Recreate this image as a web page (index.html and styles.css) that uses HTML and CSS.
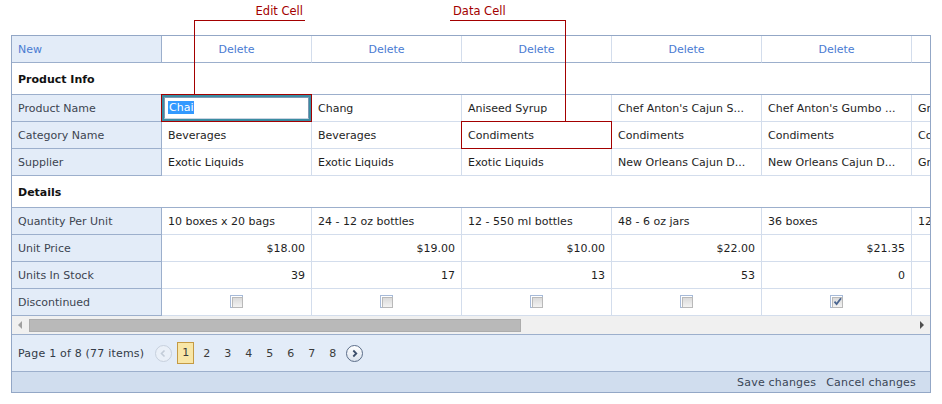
FILE: index.html
```html
<!DOCTYPE html>
<html>
<head>
<meta charset="utf-8">
<title>Vertical Grid</title>
<link rel="stylesheet" href="styles.css">
</head>
<body>
<div class="page">
  <div class="callout callout-edit"><span class="callout-text">Edit Cell</span></div>
  <div class="callout callout-data"><span class="callout-text">Data Cell</span></div>

  <div class="grid">
    <div class="rows">
      <div class="row head">
        <div class="cell label"><span class="link">New</span></div>
        <div class="cell center"><span class="link">Delete</span></div>
        <div class="cell center"><span class="link">Delete</span></div>
        <div class="cell center"><span class="link">Delete</span></div>
        <div class="cell center"><span class="link">Delete</span></div>
        <div class="cell center"><span class="link">Delete</span></div>
        <div class="cell center"><span class="link">Delete</span></div>
      </div>
      <div class="band">Product Info</div>
      <div class="row">
        <div class="cell label">Product Name</div>
        <div class="cell boxed">
          <div class="editor"><div class="editor-input"><span class="sel">Chai</span></div></div>
        </div>
        <div class="cell">Chang</div>
        <div class="cell">Aniseed Syrup</div>
        <div class="cell">Chef Anton's Cajun S...</div>
        <div class="cell">Chef Anton's Gumbo ...</div>
        <div class="cell">Grandma's Boysenberry Spread</div>
      </div>
      <div class="row">
        <div class="cell label">Category Name</div>
        <div class="cell">Beverages</div>
        <div class="cell">Beverages</div>
        <div class="cell boxed data-box">Condiments</div>
        <div class="cell">Condiments</div>
        <div class="cell">Condiments</div>
        <div class="cell">Condiments</div>
      </div>
      <div class="row">
        <div class="cell label">Supplier</div>
        <div class="cell">Exotic Liquids</div>
        <div class="cell">Exotic Liquids</div>
        <div class="cell">Exotic Liquids</div>
        <div class="cell">New Orleans Cajun D...</div>
        <div class="cell">New Orleans Cajun D...</div>
        <div class="cell">Grandma Kelly's Homestead</div>
      </div>
      <div class="band">Details</div>
      <div class="row">
        <div class="cell label">Quantity Per Unit</div>
        <div class="cell">10 boxes x 20 bags</div>
        <div class="cell">24 - 12 oz bottles</div>
        <div class="cell">12 - 550 ml bottles</div>
        <div class="cell">48 - 6 oz jars</div>
        <div class="cell">36 boxes</div>
        <div class="cell">12 - 8 oz jars</div>
      </div>
      <div class="row">
        <div class="cell label">Unit Price</div>
        <div class="cell num">$18.00</div>
        <div class="cell num">$19.00</div>
        <div class="cell num">$10.00</div>
        <div class="cell num">$22.00</div>
        <div class="cell num">$21.35</div>
        <div class="cell num">$25.00</div>
      </div>
      <div class="row">
        <div class="cell label">Units In Stock</div>
        <div class="cell num">39</div>
        <div class="cell num">17</div>
        <div class="cell num">13</div>
        <div class="cell num">53</div>
        <div class="cell num">0</div>
        <div class="cell num">120</div>
      </div>
      <div class="row">
        <div class="cell label">Discontinued</div>
        <div class="cell"><span class="cb"></span></div>
        <div class="cell"><span class="cb"></span></div>
        <div class="cell"><span class="cb"></span></div>
        <div class="cell"><span class="cb"></span></div>
        <div class="cell"><span class="cb checked"><svg viewBox="0 0 9 9" width="9" height="9"><path d="M1.5 4.6 L3.6 7 L8 1.2" fill="none" stroke="#4a6590" stroke-width="1.8"/></svg></span></div>
        <div class="cell"><span class="cb"></span></div>
      </div>
    </div>

    <div class="hscroll">
      <span class="arrow arrow-left"></span>
      <span class="thumb"></span>
      <span class="arrow arrow-right"></span>
    </div>

    <div class="pager">
      <span class="pager-summary">Page 1 of 8 (77 items)</span>
      <span class="nav nav-disabled"><svg viewBox="0 0 15 15" width="15" height="15"><path d="M8.5 4.5 L5.5 7.5 L8.5 10.5" fill="none" stroke="#c3ccd8" stroke-width="1.6"/></svg></span>
      <span class="page-num current">1</span>
      <span class="page-num">2</span>
      <span class="page-num">3</span>
      <span class="page-num">4</span>
      <span class="page-num">5</span>
      <span class="page-num">6</span>
      <span class="page-num">7</span>
      <span class="page-num">8</span>
      <span class="nav nav-active"><svg viewBox="0 0 15 15" width="15" height="15"><path d="M6.3 4.5 L9.3 7.5 L6.3 10.5" fill="none" stroke="#3c4e6a" stroke-width="1.8"/></svg></span>
    </div>

    <div class="footer">
      <span class="footer-link">Save changes</span>
      <span class="footer-link">Cancel changes</span>
    </div>
  </div>
</div>
</body>
</html>
```
FILE: styles.css
```css
* {
  box-sizing: border-box;
}

body {
  margin: 0;
  background: #ffffff;
  font-family: "DejaVu Sans", Verdana, sans-serif;
  font-size: 11px;
  color: #1e1e1e;
}

.page {
  position: relative;
  padding: 35px 0 0 11px;
}

/* callouts */
.callout {
  position: absolute;
  top: 20px;
  z-index: 5;
  border-top: 1px solid #a30000;
}

.callout-edit {
  left: 194px;
  width: 111px;
  height: 75px;
  border-left: 1px solid #a30000;
}

.callout-data {
  left: 450px;
  width: 116px;
  height: 102px;
  border-right: 1px solid #a30000;
}

.callout-text {
  position: absolute;
  top: -17px;
  color: #a30000;
  font-size: 11.5px;
  white-space: nowrap;
}

.callout-edit .callout-text {
  right: 2px;
}

.callout-data .callout-text {
  left: 3px;
}

/* grid */
.grid {
  width: 920px;
  border: 1px solid #93a7c6;
}

.rows {
  overflow: hidden;
}

.row {
  display: flex;
  height: 27px;
}

.cell {
  flex: 0 0 150px;
  width: 150px;
  height: 27px;
  padding: 1px 6px 0;
  line-height: 26px;
  white-space: nowrap;
  overflow: hidden;
  border-right: 1px solid #d3ddec;
  border-bottom: 1px solid #d3ddec;
  position: relative;
}

.cell.label {
  background: #e3ecf8;
  color: #3c4450;
  border-right-color: #9cafcc;
  border-bottom-color: #9cafcc;
}

.head .cell {
  border-bottom-color: #9cafcc;
}

.center {
  text-align: center;
}

.num {
  text-align: right;
}

.link {
  color: #4a7bd2;
}

.band {
  height: 32px;
  line-height: 31px;
  padding: 1px 6px 0;
  font-weight: bold;
  color: #111;
  border-bottom: 1px solid #9cafcc;
}

/* highlighted cells */
.cell.boxed {
  overflow: visible;
}

.data-box::after {
  content: "";
  position: absolute;
  top: -1px;
  left: -1px;
  right: -1px;
  bottom: -1px;
  border: 1px solid #a30000;
  z-index: 3;
}

.editor {
  position: absolute;
  top: -1px;
  left: -1px;
  right: -1px;
  bottom: -1px;
  z-index: 3;
  border: 1px solid #a30000;
  background: #3a8ca2;
  padding: 2px;
}

.editor-input {
  height: 100%;
  background: #fff;
  border: 1px solid #7f97b2;
  border-bottom-color: #c9d4e2;
  padding: 0 0 0 3px;
  line-height: 20px;
}

.sel {
  background: #3399ff;
  color: #fff;
  padding: 0 1px;
}

/* checkbox */
.cb {
  display: block;
  width: 13px;
  height: 13px;
  margin: 5px auto 0;
  border: 1px solid #a6bad8;
  background: #fff;
  padding: 1px;
  position: relative;
}

.cb::before {
  content: "";
  display: block;
  width: 100%;
  height: 100%;
  border: 1px solid #b9b9b9;
  background: linear-gradient(#dadada, #f3f3f3);
}

.cb svg {
  position: absolute;
  left: 2px;
  top: 1px;
}

/* scrollbar */
.hscroll {
  height: 18px;
  background: #f0f0f0;
  display: flex;
  align-items: center;
  position: relative;
}

.arrow {
  width: 0;
  height: 0;
  border-top: 4px solid transparent;
  border-bottom: 4px solid transparent;
}

.arrow-left {
  border-right: 4px solid #a0a0a0;
  margin: 0 7px 0 6px;
}

.thumb {
  width: 492px;
  height: 13px;
  background: #b9b9b9;
  border: 1px solid #acacac;
}

.arrow-right {
  border-left: 4px solid #505050;
  margin-left: auto;
  margin-right: 6px;
}

/* pager */
.pager {
  height: 37px;
  border-top: 1px solid #9cafcc;
  background: #e3ecf8;
  display: flex;
  align-items: center;
  padding: 0 6px;
  color: #333b47;
}

.pager-summary {
  letter-spacing: 0.2px;
  margin-right: 11px;
}

.nav {
  width: 17px;
  height: 17px;
  border-radius: 50%;
  display: flex;
  align-items: center;
  justify-content: center;
}

.nav-disabled {
  border: 1px solid #c7d0dd;
  background: #eaf0f8;
  margin-right: 5px;
}

.nav-active {
  border: 1px solid #5b6d88;
  background: linear-gradient(#ffffff, #dbe3ee);
  margin-left: 1px;
}

.page-num {
  width: 17px;
  text-align: center;
  margin-right: 4px;
  color: #3a3a3a;
}

.page-num.current {
  height: 22px;
  line-height: 20px;
  background: #f8e6a7;
  border: 1px solid #c49a45;
  margin-right: 4px;
}

.page-num:last-of-type {
  margin-right: 0;
}

/* footer */
.footer {
  height: 21px;
  border-top: 1px solid #9cafcc;
  background: #d0ddee;
  display: flex;
  justify-content: flex-end;
  align-items: center;
  gap: 10px;
  padding-right: 14px;
  color: #3a4656;
  letter-spacing: 0.2px;
}
```
